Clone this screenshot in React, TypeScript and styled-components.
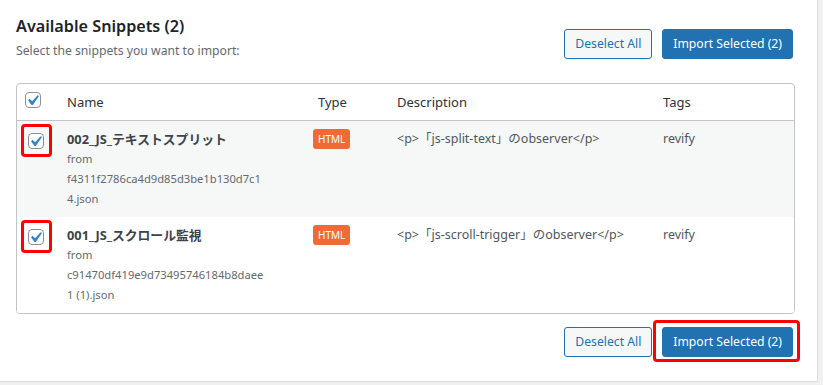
import React from "react";
import styled, { createGlobalStyle } from "styled-components";

const GlobalStyle = createGlobalStyle`
  html, body {
    margin: 0;
    padding: 0;
    background: #f0f0f1;
  }
  body {
    font-family: "Noto Sans", "Noto Sans CJK JP", sans-serif;
    color: #3c434a;
  }
`;

interface Snippet {
  id: string;
  name: string;
  file: string;
  type: string;
  description: string;
  tags: string;
}

const snippets: Snippet[] = [
  {
    id: "002",
    name: "002_JS_テキストスプリット",
    file: "f4311f2786ca4d9d85d3be1b130d7c14.json",
    type: "HTML",
    description: "<p>「js-split-text」のobserver</p>",
    tags: "revify",
  },
  {
    id: "001",
    name: "001_JS_スクロール監視",
    file: "c91470df419e9d73495746184b8daee1 (1).json",
    type: "HTML",
    description: "<p>「js-scroll-trigger」のobserver</p>",
    tags: "revify",
  },
];

const Panel = styled.div`
  box-sizing: border-box;
  width: 818px;
  height: 382px;
  background: #fff;
  border-right: 1px solid #dcdcde;
  border-bottom: 1px solid #dcdcde;
  padding: 14px 24px 0 16px;
`;

const Header = styled.div`
  display: flex;
  justify-content: space-between;
  align-items: flex-end;
  margin-bottom: 22px;
`;

const Title = styled.h2`
  margin: 0;
  font-size: 16.2px;
  line-height: 24px;
  font-weight: 600;
  color: #1d2327;
`;

const Subtitle = styled.p`
  margin: 3px 0 0;
  font-size: 12.2px;
  line-height: 20px;
  color: #646970;
`;

const Actions = styled.div<{ $bottom?: boolean }>`
  display: flex;
  align-items: center;
  gap: ${(p) => (p.$bottom ? "0" : "10px")};
  margin-bottom: ${(p) => (p.$bottom ? "0" : "2px")};
  justify-content: flex-end;
`;

const Footer = styled.div`
  display: flex;
  justify-content: flex-end;
  margin-top: 13px;
`;

const Button = styled.button<{ $primary?: boolean; $marked?: boolean }>`
  position: relative;
  box-sizing: border-box;
  height: 30px;
  padding: 0 10px;
  border-radius: 3px;
  border: 1px solid #2271b1;
  font-family: "Noto Sans", sans-serif;
  font-size: 12.2px;
  line-height: 28px;
  cursor: pointer;
  background: ${(p) => (p.$primary ? "#2271b1" : "#f6f7f7")};
  color: ${(p) => (p.$primary ? "#fff" : "#2271b1")};
  margin-left: ${(p) => (p.$marked ? "10px" : "0")};

  ${(p) =>
    p.$marked &&
    `
    &::after {
      content: "";
      position: absolute;
      top: -8px;
      right: -8px;
      bottom: -6px;
      left: -10px;
      border: 3px solid #f00;
      border-radius: 4px;
      pointer-events: none;
    }
  `}
`;

const TableBox = styled.div`
  border: 1px solid #c3c4c7;
  border-radius: 4px;
  overflow: hidden;
  width: 777px;
`;

const Table = styled.table`
  width: 100%;
  border-collapse: collapse;
  table-layout: fixed;
`;

const HeadCell = styled.th<{ $indent?: number }>`
  text-align: left;
  font-weight: 400;
  font-size: 13px;
  line-height: 20px;
  color: #2c3338;
  padding: 8px 10px 8px ${(p) => p.$indent ?? 10}px;
  border-bottom: 1px solid #c3c4c7;
  vertical-align: top;
`;

const Row = styled.tr<{ $striped?: boolean }>`
  background: ${(p) => (p.$striped ? "#f6f7f7" : "#fff")};
`;

const Cell = styled.td`
  padding: 8px 10px;
  vertical-align: top;
  font-size: 12.5px;
  line-height: 20px;
  color: #50575e;
`;

const CheckCell = styled.td`
  padding: 12px 0 0 11px;
  vertical-align: top;
`;

const HeadCheckCell = styled.th`
  padding: 8px 0 8px 8px;
  vertical-align: top;
  border-bottom: 1px solid #c3c4c7;
  text-align: left;
`;

const Box = styled.span<{ $marked?: boolean }>`
  position: relative;
  display: block;
  box-sizing: border-box;
  width: 16px;
  height: 16px;
  border: 1px solid #8c8f94;
  border-radius: 4px;
  background: #fff;

  svg {
    display: block;
    width: 14px;
    height: 14px;
  }

  ${(p) =>
    p.$marked &&
    `
    &::after {
      content: "";
      position: absolute;
      top: -10px;
      right: -9px;
      bottom: -9px;
      left: -8px;
      border: 3px solid #f00;
      border-radius: 4px;
    }
  `}
`;

const SnippetName = styled.strong`
  display: block;
  font-size: 12.8px;
  font-weight: 700;
  color: #3c434a;
  line-height: 20px;
`;

const FromFile = styled.span`
  display: block;
  max-width: 200px;
  font-size: 11.2px;
  line-height: 20px;
  color: #646970;
  overflow-wrap: anywhere;
`;

const Badge = styled.span`
  display: inline-block;
  height: 20px;
  padding: 0 5px;
  border-radius: 3px;
  background: #ef6b36;
  color: #fff;
  font-size: 10px;
  line-height: 20px;
`;

const Checkbox = ({ marked }: { marked?: boolean }) => (
  <Box $marked={marked}>
    <svg viewBox="3.81 2.857 13.333 13.333">
      <path
        fill="#3582c4"
        d="M14.83 4.89l1.34.94-5.81 8.38H9.02L5.78 9.67l1.34-1.25 2.57 2.4z"
      />
    </svg>
  </Box>
);

export default function App() {
  return (
    <>
      <GlobalStyle />
      <Panel>
        <Header>
          <div>
            <Title>Available Snippets (2)</Title>
            <Subtitle>Select the snippets you want to import:</Subtitle>
          </div>
          <Actions>
            <Button>Deselect All</Button>
            <Button $primary>Import Selected (2)</Button>
          </Actions>
        </Header>

        <TableBox>
          <Table>
            <colgroup>
              <col style={{ width: 40 }} />
              <col style={{ width: 246 }} />
              <col style={{ width: 84 }} />
              <col style={{ width: 266 }} />
              <col />
            </colgroup>
            <thead>
              <tr>
                <HeadCheckCell>
                  <Checkbox />
                </HeadCheckCell>
                <HeadCell>Name</HeadCell>
                <HeadCell $indent={15}>Type</HeadCell>
                <HeadCell>Description</HeadCell>
                <HeadCell>Tags</HeadCell>
              </tr>
            </thead>
            <tbody>
              {snippets.map((s, i) => (
                <Row key={s.id} $striped={i % 2 === 0}>
                  <CheckCell>
                    <Checkbox marked />
                  </CheckCell>
                  <Cell>
                    <SnippetName>{s.name}</SnippetName>
                    <FromFile>from {s.file}</FromFile>
                  </Cell>
                  <Cell>
                    <Badge>{s.type}</Badge>
                  </Cell>
                  <Cell>{s.description}</Cell>
                  <Cell>{s.tags}</Cell>
                </Row>
              ))}
            </tbody>
          </Table>
        </TableBox>

        <Footer>
          <Actions $bottom>
            <Button>Deselect All</Button>
            <Button $primary $marked>
              Import Selected (2)
            </Button>
          </Actions>
        </Footer>
      </Panel>
    </>
  );
}
